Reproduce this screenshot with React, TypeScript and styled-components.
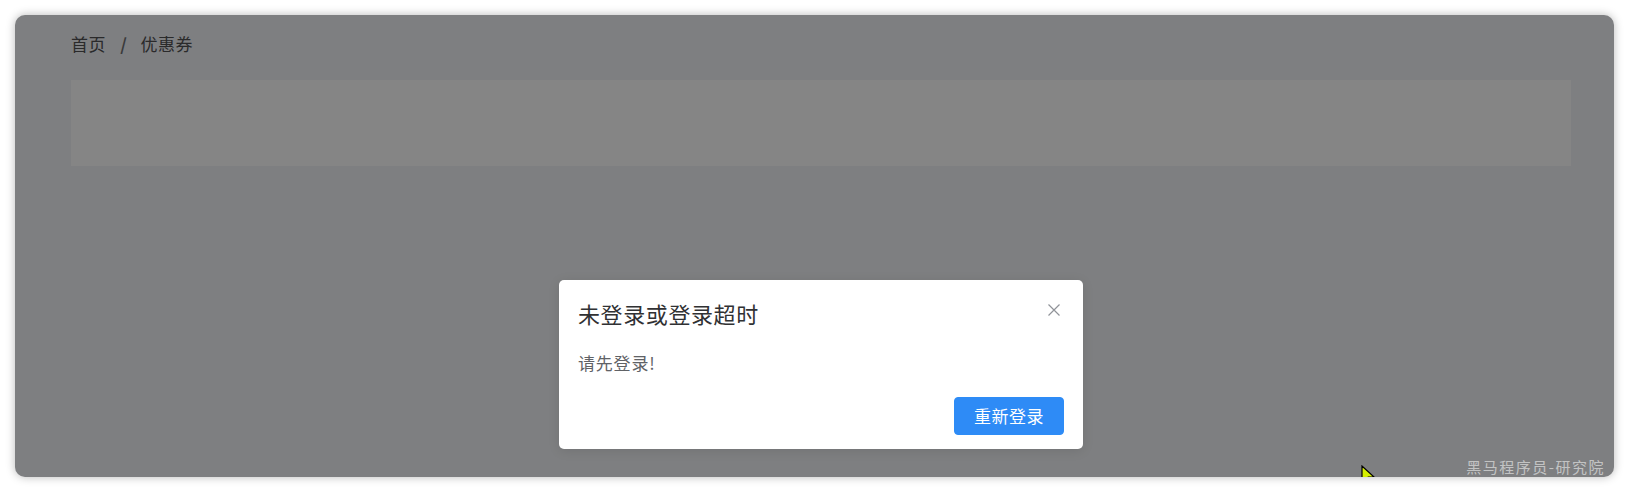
import React from 'react';
import styled, { createGlobalStyle } from 'styled-components';

const GlobalStyle = createGlobalStyle`
  html, body {
    margin: 0;
    padding: 0;
    background: #ffffff;
  }
  body {
    font-family: "Noto Sans CJK SC", "Noto Sans", "Liberation Sans", sans-serif;
  }
`;

const Page = styled.div`
  padding: 15px;
  width: 1629px;
  height: 494px;
  box-sizing: border-box;
`;

const Window = styled.div`
  position: relative;
  height: 462px;
  border-radius: 10px;
  overflow: hidden;
  background: #7e7f81;
  box-shadow: 0 0 10px rgba(0, 0, 0, 0.28);
  padding: 17px 43px 0 56px;
  box-sizing: border-box;
`;

const Breadcrumb = styled.div`
  display: flex;
  align-items: center;
  height: 24px;
  font-size: 17px;
  line-height: 24px;
  letter-spacing: 0.6px;
  color: #2a2a2b;
`;

const Separator = styled.span`
  margin: 0 13px 0 14px;
  font-weight: 700;
  color: #3a3a3b;
`;

const SearchPanel = styled.div`
  margin-top: 24px;
  height: 86px;
  background: #858585;
`;

const Watermark = styled.div`
  position: absolute;
  right: 9px;
  bottom: 2px;
  font-size: 15px;
  line-height: 17px;
  letter-spacing: 1.5px;
  color: rgba(255, 255, 255, 0.55);
  z-index: 3;
`;

const Cursor = styled.svg`
  position: absolute;
  left: 1346px;
  top: 450px;
  z-index: 4;
`;

const ModalLayer = styled.div`
  position: absolute;
  inset: 0;
  display: flex;
  justify-content: center;
  align-items: flex-start;
  padding: 265px 0 0 13px;
  z-index: 2;
`;

const Dialog = styled.div`
  position: relative;
  width: 524px;
  height: 169px;
  box-sizing: border-box;
  background: #ffffff;
  border-radius: 5px;
  box-shadow: 0 2px 12px rgba(0, 0, 0, 0.1);
`;

const Header = styled.div`
  padding: 21px 18px 12px 19px;
`;

const Title = styled.div`
  font-size: 22px;
  line-height: 24px;
  letter-spacing: 0.6px;
  color: #303133;
`;

const CloseButton = styled.button`
  position: absolute;
  top: 23px;
  right: 22px;
  width: 14px;
  height: 14px;
  padding: 0;
  border: none;
  background: transparent;
  display: flex;
  align-items: center;
  justify-content: center;
  cursor: pointer;
`;

const Body = styled.div`
  padding: 14px 18px 12px 19px;
  font-size: 17px;
  line-height: 24px;
  letter-spacing: 0.8px;
  color: #606266;
`;

const Footer = styled.div`
  display: flex;
  justify-content: flex-end;
  padding: 10px 19px 0 18px;
`;

const PrimaryButton = styled.button`
  width: 110px;
  height: 38px;
  border: 1px solid #2d8cf6;
  border-radius: 4px;
  background: #2e8bf6;
  color: #ffffff;
  font-family: inherit;
  font-size: 17px;
  line-height: 20px;
  letter-spacing: 0.5px;
  padding: 0;
  cursor: pointer;
`;

const CloseIcon = () => (
  <svg width="14" height="14" viewBox="0 0 14 14" fill="none">
    <path d="M1.5 1.5 L12.5 12.5 M12.5 1.5 L1.5 12.5" stroke="#909399" strokeWidth="1.2" />
  </svg>
);

export default function App() {
  return (
    <>
      <GlobalStyle />
      <Page>
        <Window>
          <Breadcrumb>
            <span>首页</span>
            <Separator>/</Separator>
            <span>优惠券</span>
          </Breadcrumb>
          <SearchPanel />
          <ModalLayer>
            <Dialog>
              <Header>
                <Title>未登录或登录超时</Title>
              </Header>
              <CloseButton aria-label="关闭">
                <CloseIcon />
              </CloseButton>
              <Body>请先登录!</Body>
              <Footer>
                <PrimaryButton>重新登录</PrimaryButton>
              </Footer>
            </Dialog>
          </ModalLayer>
          <Watermark>黑马程序员-研究院</Watermark>
          <Cursor width="14" height="20" viewBox="0 0 14 20">
            <path d="M1 1 L1 17 L5 13 L8 19.5 L10.5 18.5 L7.5 12 L13 12 Z" fill="#d6f000" stroke="#000" strokeWidth="1.2" />
          </Cursor>
        </Window>
      </Page>
    </>
  );
}
